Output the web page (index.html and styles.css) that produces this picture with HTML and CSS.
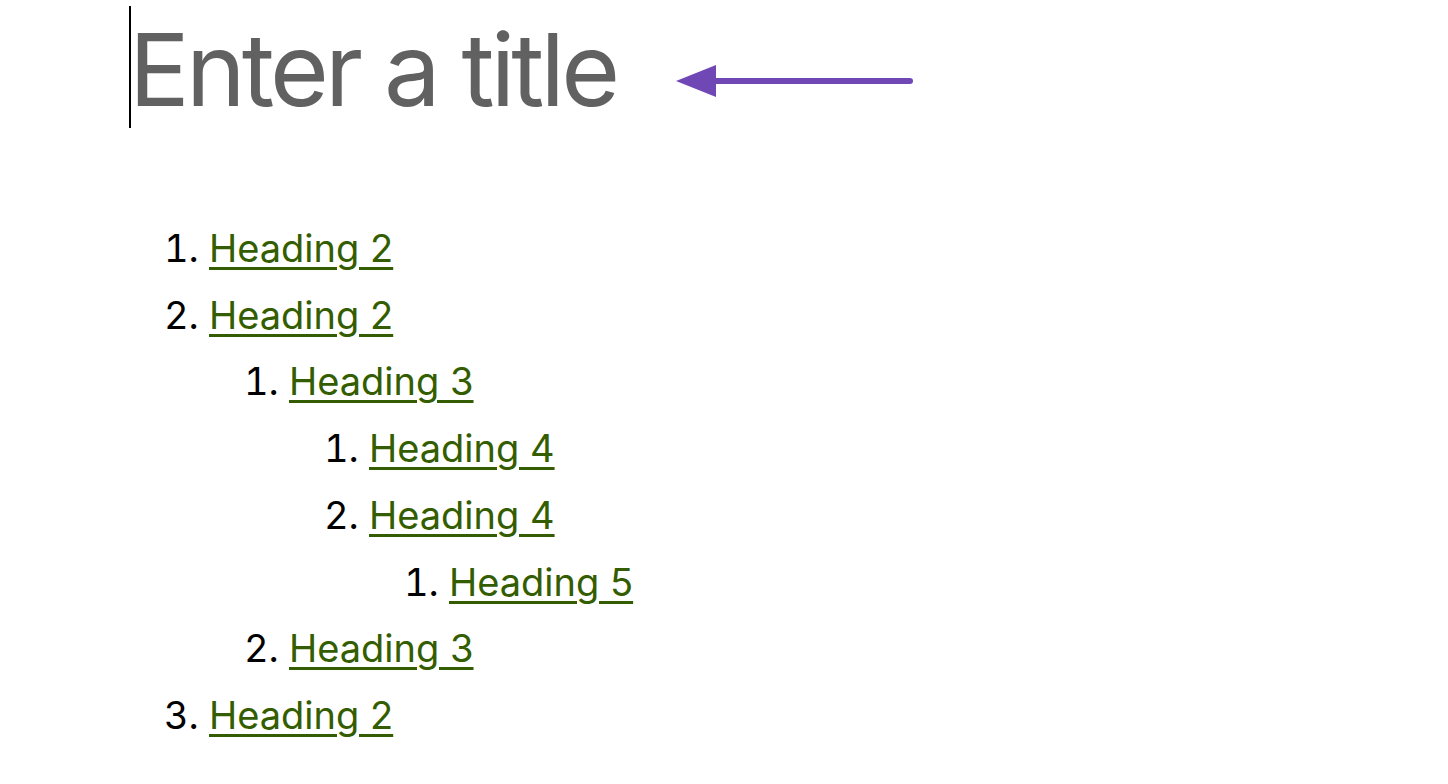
FILE: index.html
```html
<!DOCTYPE html>
<html lang="en">
<head>
    <meta charset="UTF-8">
    <title>Table of contents</title>
    <link rel="stylesheet" href="styles.css">
</head>
<body>
    <div class="page">
        <div class="title-row">
            <div class="caret"></div>
            <h1 class="title">Enter a title</h1>
            <svg class="arrow" width="240" height="40" viewBox="0 0 240 40">
                <line x1="38" y1="20" x2="234" y2="20" stroke="#7048b6" stroke-width="6" stroke-linecap="round"/>
                <polygon points="0,20 40,4 40,36" fill="#7048b6"/>
            </svg>
        </div>

        <ol class="toc">
            <li><a href="#">Heading 2</a></li>
            <li><a href="#">Heading 2</a>
                <ol>
                    <li><a href="#">Heading 3</a>
                        <ol>
                            <li><a href="#">Heading 4</a></li>
                            <li><a href="#">Heading 4</a>
                                <ol>
                                    <li><a href="#">Heading 5</a></li>
                                </ol>
                            </li>
                        </ol>
                    </li>
                    <li><a href="#">Heading 3</a></li>
                </ol>
            </li>
            <li><a href="#">Heading 2</a></li>
        </ol>
    </div>
</body>
</html>
```

FILE: styles.css
```css
body {
    margin: 0;
    font-family: Inter, "Noto Sans", sans-serif;
    background: #fff;
}

.page {
    padding: 6px 0 0 129px;
}

.title-row {
    display: flex;
    align-items: flex-start;
}

.caret {
    width: 2px;
    height: 122px;
    background: #000;
}

.title {
    margin: 0 0 0 -2px;
    font-size: 101px;
    font-weight: 400;
    line-height: 126px;
    letter-spacing: -3.8px;
    color: #616161;
}

.arrow {
    margin: 55px 0 0 60px;
}

.toc {
    margin: 83px 0 0 0;
    padding-left: 80px;
    font-size: 38px;
    line-height: 66.7px;
    color: #000;
}

.toc ol {
    margin: 0;
    padding-left: 80px;
}

.toc a {
    color: #335d00;
    text-decoration: underline;
    text-decoration-thickness: 3px;
    text-underline-offset: 5px;
}
```
